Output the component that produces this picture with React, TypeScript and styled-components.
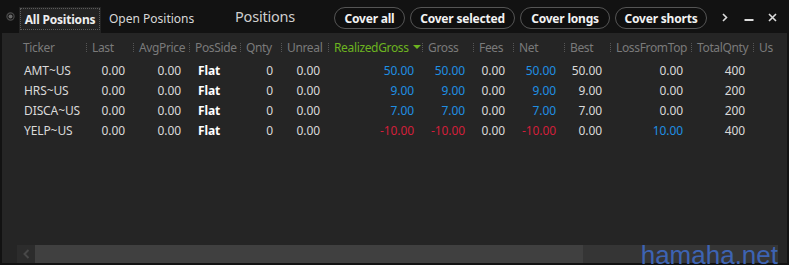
import React from 'react';
import styled, { createGlobalStyle } from 'styled-components';

const Global = createGlobalStyle`
  html, body { margin: 0; padding: 0; background: #121212; }
  body { font-family: "Noto Sans", "Open Sans", sans-serif; }
  #root { width: 789px; height: 265px; }
`;

const Window = styled.div`
  width: 789px;
  height: 265px;
  box-sizing: border-box;
  padding-bottom: 2px;
  background: #121212;
  position: relative;
  overflow: hidden;
  display: flex;
  flex-direction: column;
`;

const TopBar = styled.div`
  height: 33px;
  flex-shrink: 0;
  display: flex;
  align-items: stretch;
`;

const TabsArea = styled.div`
  width: 227px;
  display: flex;
  align-items: flex-end;
`;

const Radio = styled.svg`
  width: 9px;
  height: 9px;
  margin: 0 4px 12px 6px;
  align-self: flex-end;
`;

const ActiveTab = styled.div`
  width: 82px;
  height: 26px;
  box-sizing: border-box;
  padding: 1px 1px 3px 1px;
  background: #232323;
  display: flex;
`;

const FocusRing = styled.div`
  flex: 1;
  border: 1px dotted #5a5a5a;
  display: flex;
  align-items: center;
  justify-content: center;
  color: #eeeeee;
  font-weight: 700;
  font-size: 12px;
  letter-spacing: -0.2px;
`;

const Tab = styled.div`
  height: 26px;
  padding: 0 0 4px 8px;
  box-sizing: border-box;
  display: flex;
  align-items: center;
  color: #d8d8d8;
  font-size: 12px;
`;

const Title = styled.div`
  width: 107px;
  box-sizing: border-box;
  padding: 0 0 2px 8px;
  display: flex;
  align-items: center;
  color: #cfcfcf;
  font-size: 14.5px;
  letter-spacing: -0.2px;
`;

const Buttons = styled.div`
  display: flex;
  gap: 5px;
  align-items: flex-start;
  padding-top: 7px;
`;

const PillButton = styled.div<{ $w: number }>`
  width: ${p => p.$w}px;
  height: 22px;
  box-sizing: border-box;
  border: 1.5px solid #555;
  border-radius: 11px;
  background: #0f0f0f;
  color: #f2f2f2;
  font-size: 12px;
  font-weight: 700;
  display: flex;
  align-items: center;
  justify-content: center;
  letter-spacing: -0.2px;
`;

const Controls = styled.div`
  display: flex;
  align-items: flex-start;
  padding-top: 13px;
  margin-left: 15px;
`;

const CtrlIcon = styled.svg<{ $ml: number }>`
  margin-left: ${p => p.$ml}px;
  display: block;
`;

const Panel = styled.div`
  flex: 1;
  margin: 0 2px;
  background: #252525;
  display: flex;
  flex-direction: column;
  overflow: hidden;
`;

const Table = styled.div`
  padding: 3px 0 0 15px;
  overflow: hidden;
`;

const cols = '69px 47px 56px 51px 41px 47px 94px 51px 40px 51px 46px 81px 62px 40px';

const HeaderRow = styled.div`
  display: grid;
  grid-template-columns: ${cols};
  height: 22px;
  align-items: center;
  margin-bottom: 2px;
`;

const HeadCell = styled.div<{ $first?: boolean; $active?: boolean }>`
  position: relative;
  padding-left: 6px;
  font-size: 12px;
  letter-spacing: -0.35px;
  color: ${p => (p.$active ? '#6cb420' : '#7a7a7a')};
  white-space: nowrap;
  display: flex;
  align-items: center;
  &::before {
    content: '';
    display: ${p => (p.$first ? 'none' : 'block')};
    position: absolute;
    left: 0;
    top: 50%;
    margin-top: -4px;
    height: 9px;
    border-left: 1px dotted #555;
  }
`;

const SortArrow = styled.span`
  width: 0;
  height: 0;
  margin-left: 4px;
  border-left: 4px solid transparent;
  border-right: 4px solid transparent;
  border-top: 4px solid #6cb420;
`;

const Row = styled.div`
  display: grid;
  grid-template-columns: ${cols};
  height: 20px;
  align-items: center;
`;

type Tone = 'plain' | 'blue' | 'red' | 'bold';

const Cell = styled.div<{ $align: 'left' | 'right'; $tone: Tone; $pl?: number }>`
  font-size: 12px;
  letter-spacing: -0.1px;
  white-space: nowrap;
  text-align: ${p => p.$align};
  padding: ${p => (p.$align === 'right' ? '0 8px 0 0' : `0 0 0 ${p.$pl ?? 8}px`)};
  color: ${p =>
    p.$tone === 'blue' ? '#1f8fe3' : p.$tone === 'red' ? '#d21f3a' : p.$tone === 'bold' ? '#ffffff' : '#d9d9d9'};
  font-weight: ${p => (p.$tone === 'bold' ? 700 : 400)};
`;

const ScrollBar = styled.div`
  margin: auto 9px 0 15px;
  height: 18px;
  display: flex;
`;

const ScrollArrow = styled.div`
  width: 18px;
  background: #2c2c2c;
  display: flex;
  align-items: center;
  justify-content: center;
`;

const Thumb = styled.div`
  width: 548px;
  background: #404040;
`;

const Track = styled.div`
  flex: 1;
  background: #353535;
`;

const Watermark = styled.div`
  position: absolute;
  right: 11px;
  bottom: 0;
  height: 20px;
  font-family: "Liberation Sans", Arial, sans-serif;
  font-size: 26px;
  line-height: 20px;
  color: #3d63b3;
`;

const headers = ['Ticker', 'Last', 'AvgPrice', 'PosSide', 'Qnty', 'Unreal', 'RealizedGross', 'Gross', 'Fees', 'Net', 'Best', 'LossFromTop', 'TotalQnty', 'Us'];

type Val = { t: string; tone?: Tone };
const rows: Val[][] = [
  [{ t: 'AMT~US' }, { t: '0.00' }, { t: '0.00' }, { t: 'Flat', tone: 'bold' }, { t: '0' }, { t: '0.00' }, { t: '50.00', tone: 'blue' }, { t: '50.00', tone: 'blue' }, { t: '0.00' }, { t: '50.00', tone: 'blue' }, { t: '50.00' }, { t: '0.00' }, { t: '400' }],
  [{ t: 'HRS~US' }, { t: '0.00' }, { t: '0.00' }, { t: 'Flat', tone: 'bold' }, { t: '0' }, { t: '0.00' }, { t: '9.00', tone: 'blue' }, { t: '9.00', tone: 'blue' }, { t: '0.00' }, { t: '9.00', tone: 'blue' }, { t: '9.00' }, { t: '0.00' }, { t: '200' }],
  [{ t: 'DISCA~US' }, { t: '0.00' }, { t: '0.00' }, { t: 'Flat', tone: 'bold' }, { t: '0' }, { t: '0.00' }, { t: '7.00', tone: 'blue' }, { t: '7.00', tone: 'blue' }, { t: '0.00' }, { t: '7.00', tone: 'blue' }, { t: '7.00' }, { t: '0.00' }, { t: '200' }],
  [{ t: 'YELP~US' }, { t: '0.00' }, { t: '0.00' }, { t: 'Flat', tone: 'bold' }, { t: '0' }, { t: '0.00' }, { t: '-10.00', tone: 'red' }, { t: '-10.00', tone: 'red' }, { t: '0.00' }, { t: '-10.00', tone: 'red' }, { t: '0.00' }, { t: '10.00', tone: 'blue' }, { t: '400' }],
];

const leftCols = new Set([0, 3]);

export default function App() {
  return (
    <>
      <Global />
      <Window>
        <TopBar>
          <TabsArea>
            <Radio viewBox="0 0 9 9">
              <circle cx="4.5" cy="4.5" r="3.6" fill="none" stroke="#4a4a4a" strokeWidth="1.2" />
              <circle cx="4.5" cy="4.5" r="2" fill="#6a6a6a" />
            </Radio>
            <ActiveTab>
              <FocusRing>All Positions</FocusRing>
            </ActiveTab>
            <Tab>Open Positions</Tab>
          </TabsArea>
          <Title>Positions</Title>
          <Buttons>
            <PillButton $w={71}>Cover all</PillButton>
            <PillButton $w={105}>Cover selected</PillButton>
            <PillButton $w={90}>Cover longs</PillButton>
            <PillButton $w={92}>Cover shorts</PillButton>
          </Buttons>
          <Controls>
            <CtrlIcon $ml={0} width="6" height="9" viewBox="0 0 6 9">
              <path d="M1 1 L4.5 4.5 L1 8" fill="none" stroke="#dcdcdc" strokeWidth="1.6" />
            </CtrlIcon>
            <CtrlIcon $ml={16} width="10" height="9" viewBox="0 0 10 9">
              <rect x="0.5" y="6" width="9" height="2" fill="#dcdcdc" />
            </CtrlIcon>
            <CtrlIcon $ml={14} width="9" height="9" viewBox="0 0 9 9">
              <path d="M1 1 L8 8 M8 1 L1 8" fill="none" stroke="#dcdcdc" strokeWidth="1.6" />
            </CtrlIcon>
          </Controls>
        </TopBar>
        <Panel>
          <Table>
            <HeaderRow>
              {headers.map((h, i) => (
                <HeadCell key={h} $first={i === 0} $active={h === 'RealizedGross'}>
                  {h}
                  {h === 'RealizedGross' && <SortArrow />}
                </HeadCell>
              ))}
            </HeaderRow>
            {rows.map((r, ri) => (
              <Row key={ri}>
                {r.map((v, ci) => (
                  <Cell
                    key={ci}
                    $align={leftCols.has(ci) ? 'left' : 'right'}
                    $tone={v.tone ?? 'plain'}
                    $pl={ci === 0 ? 7 : 9}
                  >
                    {v.t}
                  </Cell>
                ))}
              </Row>
            ))}
          </Table>
          <ScrollBar>
            <ScrollArrow>
              <svg width="7" height="10" viewBox="0 0 7 10">
                <path d="M5.5 1 L1.5 5 L5.5 9" fill="none" stroke="#484848" strokeWidth="2" />
              </svg>
            </ScrollArrow>
            <Thumb />
            <Track />
          </ScrollBar>
        </Panel>
        <Watermark>hamaha.net</Watermark>
      </Window>
    </>
  );
}
